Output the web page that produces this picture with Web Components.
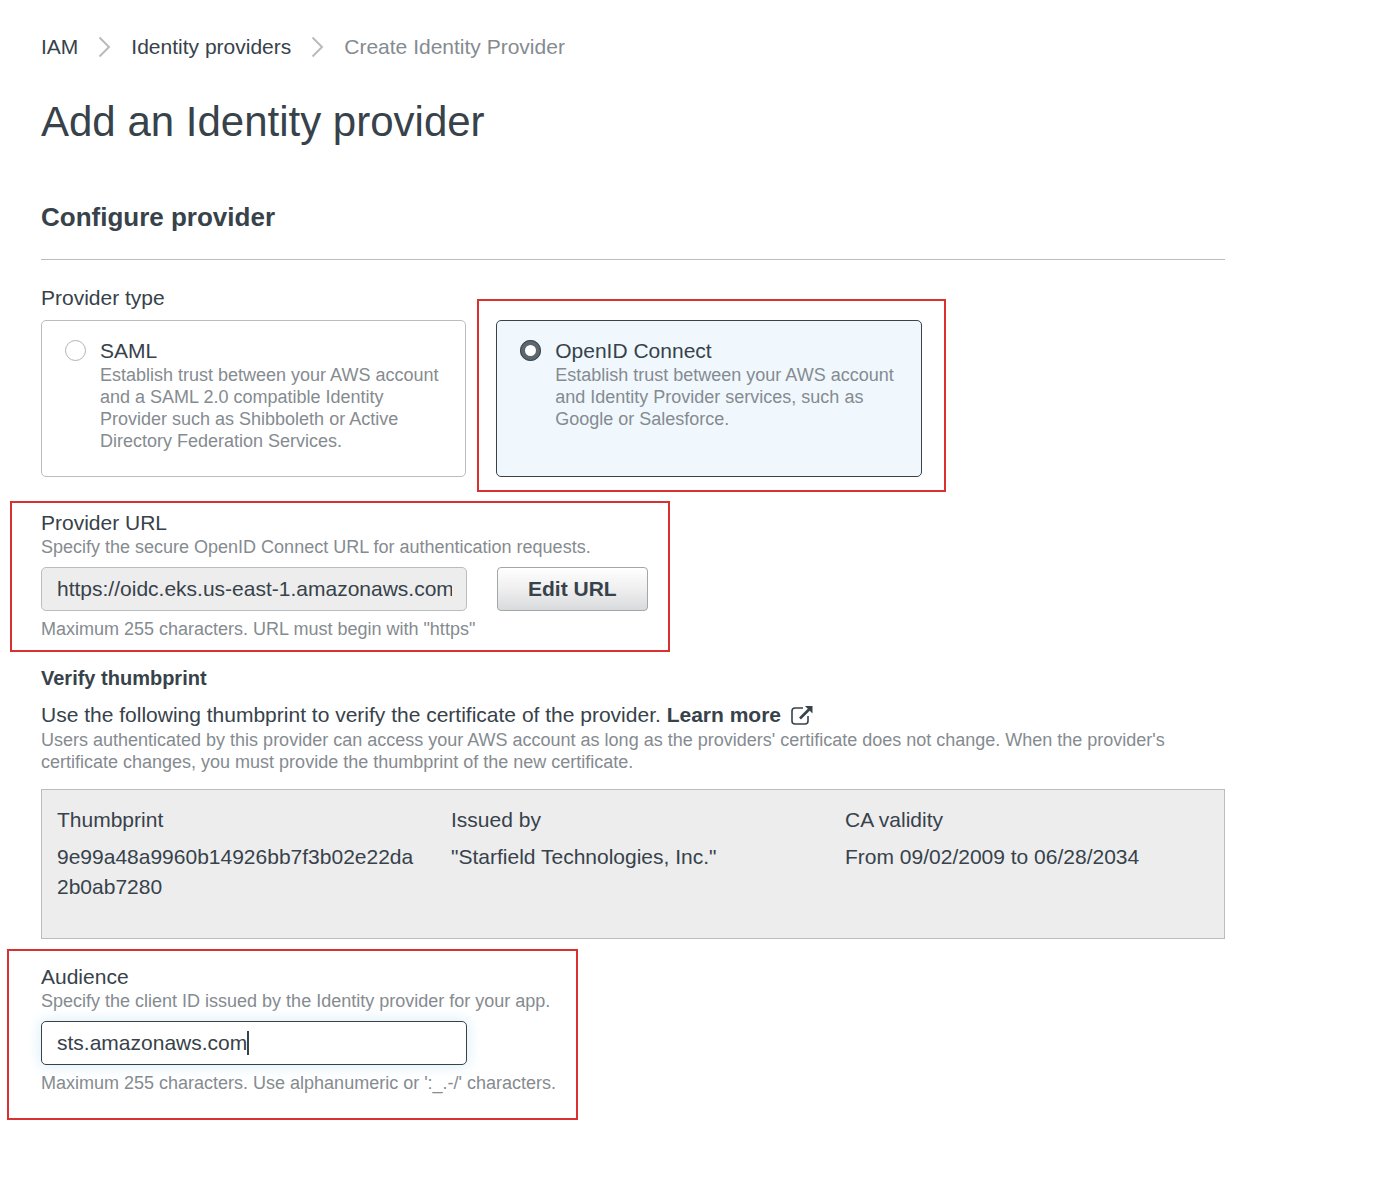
<!DOCTYPE html>
<html lang="en">
<head>
<meta charset="utf-8">
<title>Add an Identity provider</title>
<style>
  :root {
    --ink: #37424a;
    --muted: #858b90;
    --line: #b9bdc0;
    --fill: #ededee;
    --callout: #d93030;
  }
  body {
    margin: 0;
    background: #fff;
    color: var(--ink);
    font: 21px/24px "Liberation Sans", Arial, sans-serif;
  }
</style>
</head>
<body>
<iam-page></iam-page>

<script>
class BaseElement extends HTMLElement {
  constructor() {
    super();
    this.attachShadow({ mode: 'open' }).innerHTML =
      '<style>*{box-sizing:border-box}:host{display:block}' + this.constructor.css + '</style>';
  }
  connectedCallback() {
    if (this.ready) return;
    this.ready = true;
    const holder = document.createElement('template');
    holder.innerHTML = this.markup();
    this.shadowRoot.append(holder.content.cloneNode(true));
    this.wire();
  }
  wire() {}
}

class IamBreadcrumb extends BaseElement {
  static css = `
    ol { list-style: none; margin: 0; padding: 0; display: flex; align-items: center; }
    li { display: flex; align-items: center; }
    svg { display: block; margin: 0 20px; }
    a { color: inherit; text-decoration: none; }
    .current { color: var(--muted); }`;
  markup() {
    const sep = '<svg width="13" height="22" viewBox="0 0 13 22" fill="none" stroke="#b8bbbe" stroke-width="2" aria-hidden="true"><path d="M1.5 1.5 11 11 1.5 20.5"/></svg>';
    return `<nav aria-label="Breadcrumb"><ol>
      <li><a href="#iam">IAM</a></li>
      <li>${sep}<a href="#providers">Identity providers</a></li>
      <li>${sep}<span class="current" aria-current="page">Create Identity Provider</span></li>
    </ol></nav>`;
  }
}
customElements.define('iam-breadcrumb', IamBreadcrumb);

/* Red outline drawn over the page around whatever is slotted in. */
class CalloutFrame extends BaseElement {
  static css = `
    :host { position: relative; width: fit-content; }
    :host([fill]) { width: auto; }
    ::slotted(*) { height: 100%; }
    i { position: absolute; inset: var(--reach); border: 2px solid var(--callout); pointer-events: none; }`;
  markup() { return '<slot></slot><i></i>'; }
}
customElements.define('callout-frame', CalloutFrame);

class ProviderTile extends BaseElement {
  static css = `
    label {
      height: 100%; display: flex; gap: 14px; padding: 17px 24px 24px 23px;
      border: 1px solid var(--line); border-radius: 5px; background: #fff;
    }
    :host([checked]) label { border-color: var(--ink); background: #f0f8fe; }
    input {
      appearance: none; flex: none; width: 21px; height: 21px; margin: 2px 0 0;
      border: 1px solid #aeb3b6; border-radius: 50%; background: #fff;
    }
    input:checked { border: 5px solid #5d676d; outline: 1px solid #37424a; outline-offset: -1px; }
    .title { display: block; line-height: 26px; }
    .text { display: block; color: var(--muted); font-size: 18px; line-height: 22px; }`;
  markup() {
    return `<label><input type="radio" name="provider" ${this.hasAttribute('checked') ? 'checked' : ''}>
      <span><span class="title">${this.getAttribute('heading')}</span><span class="text"><slot></slot></span></span></label>`;
  }
  wire() {
    this.shadowRoot.querySelector('input').addEventListener('change', () => {
      this.setAttribute('checked', '');
      this.dispatchEvent(new CustomEvent('pick', { bubbles: true, composed: true }));
    });
  }
  clear() {
    this.removeAttribute('checked');
    this.shadowRoot.querySelector('input').checked = false;
  }
}
customElements.define('provider-tile', ProviderTile);

class TextField extends BaseElement {
  static css = `
    label { display: block; }
    p { margin: 0; color: var(--muted); font-size: 18px; line-height: 22px; }
    .help { margin-top: 1px; }
    .row { display: flex; gap: 30px; margin: 9px 0 7px; }
    input {
      width: 426px; height: 44px; padding: 0 14px 0 15px; margin: 0;
      border: 1px solid var(--line); border-radius: 5px; outline: none;
      font: inherit; color: inherit; background: #fff;
    }
    input[readonly] { background: var(--fill); }
    :host([active]) input {
      border-color: var(--ink);
      box-shadow: 0 0 14px 2px #dff0f9;
      background: linear-gradient(var(--ink), var(--ink)) 205px center / 2px 24px no-repeat #fff;
      caret-color: transparent;
    }`;
  markup() {
    const a = n => this.getAttribute(n) || '';
    return `<label for="field">${a('label')}</label>
      <p class="help">${a('help')}</p>
      <div class="row"><input id="field" type="text" value="${a('value')}" ${this.hasAttribute('readonly') ? 'readonly' : ''}><slot></slot></div>
      <p><slot name="hint"></slot></p>`;
  }
}
customElements.define('text-field', TextField);

class ActionButton extends BaseElement {
  static css = `
    button {
      height: 44px; padding: 0 30px; border: 1px solid #a2a7aa; border-radius: 4px;
      background: linear-gradient(#fff, #ededee 55%, #d8dadb); color: inherit;
      font: inherit; font-weight: bold;
    }`;
  markup() { return '<button type="button"><slot></slot></button>'; }
}
customElements.define('action-button', ActionButton);

class ThumbprintPanel extends BaseElement {
  static css = `
    h3 { margin: 0 0 13px; font-size: 20px; line-height: 24px; }
    p { margin: 0; }
    a { color: inherit; font-weight: bold; text-decoration: none; }
    svg { margin-left: 10px; vertical-align: -3px; }
    .note { margin: 2px 0 16px; color: var(--muted); font-size: 18px; line-height: 22px; }
    .box { border: 1px solid var(--line); background: var(--fill); padding: 15px 0 36px; }
    table { width: 100%; table-layout: fixed; border-collapse: collapse; }
    th, td { padding: 0 15px; text-align: left; vertical-align: top; font-weight: normal; line-height: 30px; }
    th { padding-bottom: 7px; }
    td { overflow-wrap: anywhere; }`;
  markup() {
    return `<h3>Verify thumbprint</h3>
      <p>Use the following thumbprint to verify the certificate of the provider. <a href="#learn">Learn more<svg width="22" height="19" viewBox="0 0 22 19" fill="none" stroke="#37424a" aria-hidden="true"><path stroke-width="1.6" d="M12 2H4a3 3 0 0 0-3 3v10a3 3 0 0 0 3 3h10a3 3 0 0 0 3-3V10"/><path stroke-width="2.6" d="M9 12.500 18 3.500"/><path fill="#37424a" stroke="none" d="M14 0h7.500v7.500z"/></svg></a></p>
      <p class="note">Users authenticated by this provider can access your AWS account as long as the providers' certificate does not change. When the provider's certificate changes, you must provide the thumbprint of the new certificate.</p>
      <div class="box"><table>
        <thead><tr><th scope="col">Thumbprint</th><th scope="col">Issued by</th><th scope="col">CA validity</th></tr></thead>
        <tbody><tr><td>9e99a48a9960b14926bb7f3b02e22da2b0ab7280</td><td>"Starfield Technologies, Inc."</td><td>From 09/02/2009 to 06/28/2034</td></tr></tbody>
      </table></div>`;
  }
}
customElements.define('thumbprint-panel', ThumbprintPanel);

class IamPage extends BaseElement {
  static css = `
    main { padding: 35px 175px 86px 41px; }
    h1 { margin: 39px 0 55px; font-size: 42px; line-height: 48px; font-weight: normal; }
    h2 { margin: 0; padding-bottom: 26px; border-bottom: 1px solid var(--line); font-size: 26px; line-height: 32px; }
    form { display: flex; flex-direction: column; gap: 26px; padding-top: 26px; }
    fieldset { min-width: 0; margin: 0 0 8px; padding: 0; border: 0; }
    legend { padding: 0; margin-bottom: 10px; }
    .tiles { display: grid; grid-template-columns: repeat(8, 1fr); gap: 30px; }
    .tiles > * { grid-column: span 3; }`;
  markup() {
    return `<main>
      <iam-breadcrumb></iam-breadcrumb>
      <h1>Add an Identity provider</h1>
      <h2>Configure provider</h2>
      <form>
        <fieldset>
          <legend>Provider type</legend>
          <div class="tiles">
            <provider-tile heading="SAML">Establish trust between your AWS account and a SAML 2.0 compatible Identity Provider such as Shibboleth or Active Directory Federation Services.</provider-tile>
            <callout-frame fill style="--reach: -21px -24px -15px -19px">
              <provider-tile heading="OpenID Connect" checked>Establish trust between your AWS account and Identity Provider services, such as Google or Salesforce.</provider-tile>
            </callout-frame>
          </div>
        </fieldset>
        <callout-frame style="--reach: -10px -22px -12px -31px">
          <text-field label="Provider URL" help="Specify the secure OpenID Connect URL for authentication requests." value="https://oidc.eks.us-east-1.amazonaws.com" readonly>
            <action-button>Edit URL</action-button>
            <span slot="hint">Maximum 255 characters. URL must begin with "https"</span>
          </text-field>
        </callout-frame>
        <thumbprint-panel></thumbprint-panel>
        <callout-frame style="--reach: -16px -22px -26px -34px">
          <text-field active label="Audience" help="Specify the client ID issued by the Identity provider for your app." value="sts.amazonaws.com">
            <span slot="hint">Maximum 255 characters. Use alphanumeric or ':_.-/' characters.</span>
          </text-field>
        </callout-frame>
      </form>
    </main>`;
  }
  wire() {
    const tiles = this.shadowRoot.querySelectorAll('provider-tile');
    this.shadowRoot.addEventListener('pick', e => tiles.forEach(t => t !== e.target && t.clear()));
  }
}
customElements.define('iam-page', IamPage);
</script>
</body>
</html>
